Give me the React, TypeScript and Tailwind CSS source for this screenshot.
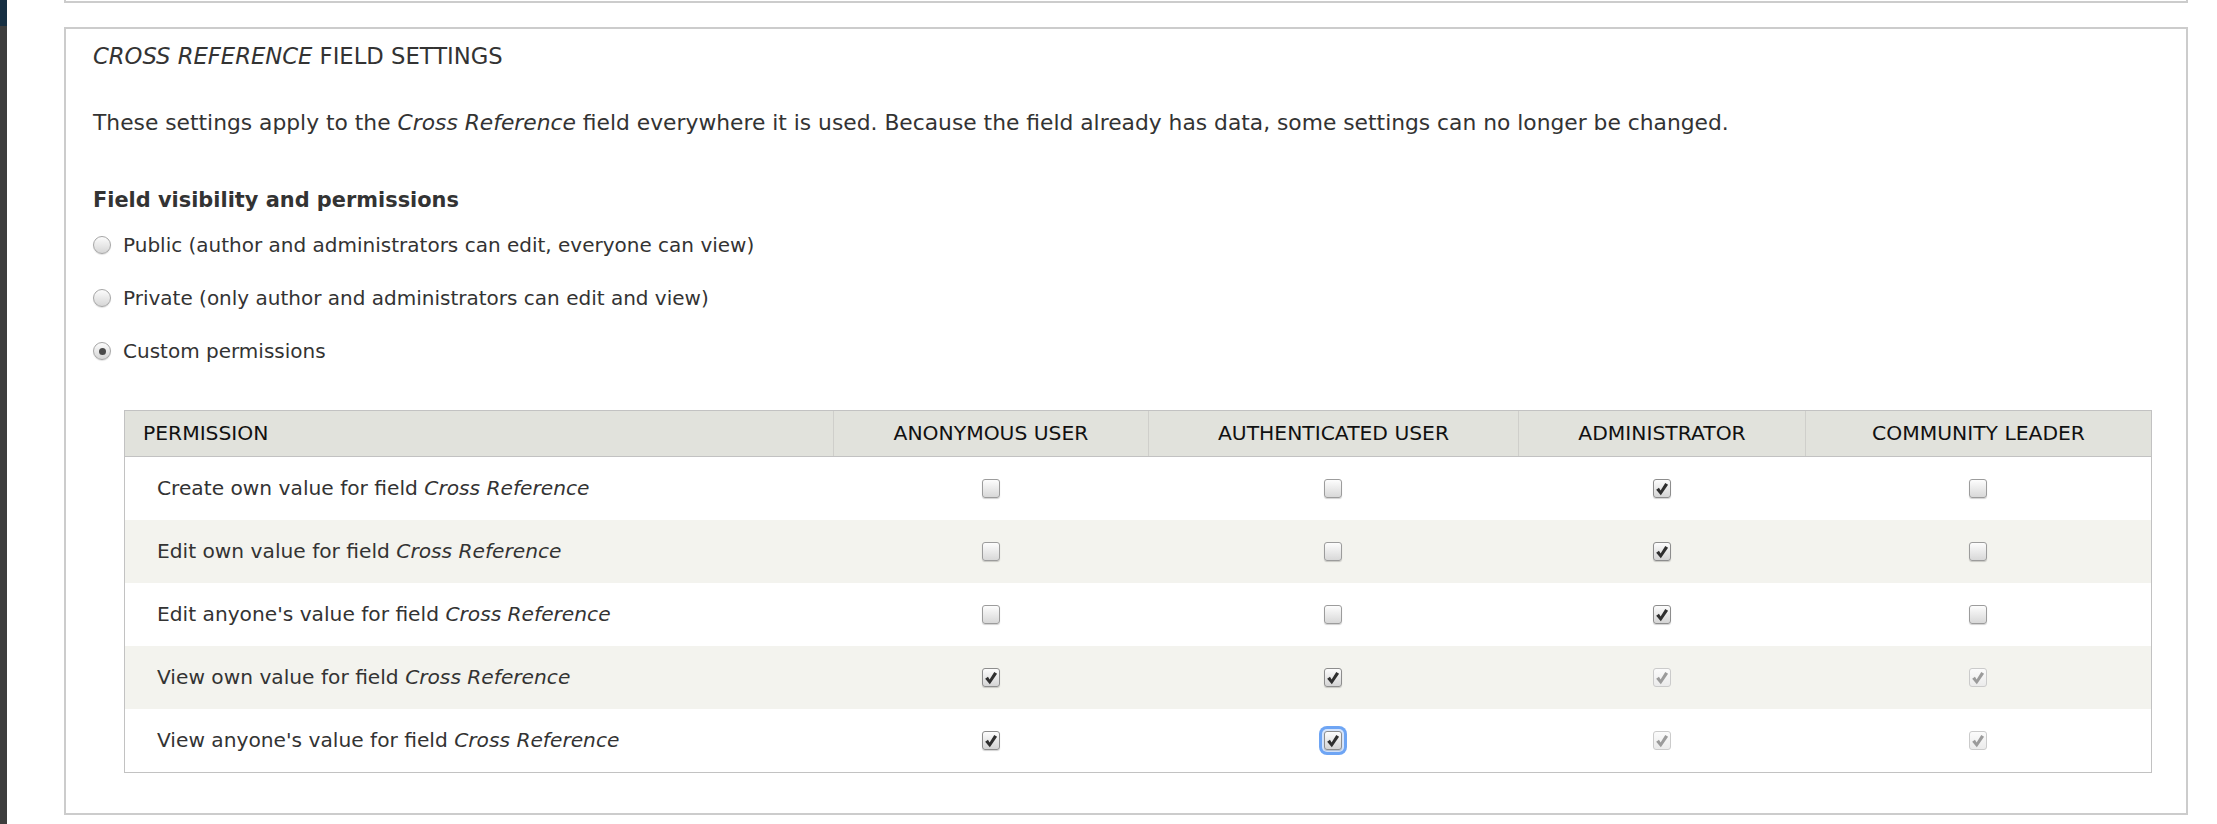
import React from 'react';

type Box = 'off' | 'on' | 'locked' | 'focus';

interface PermRow {
  label: string;
  boxes: Box[];
}

const rows: PermRow[] = [
  { label: 'Create own value for field', boxes: ['off', 'off', 'on', 'off'] },
  { label: 'Edit own value for field', boxes: ['off', 'off', 'on', 'off'] },
  { label: "Edit anyone's value for field", boxes: ['off', 'off', 'on', 'off'] },
  { label: 'View own value for field', boxes: ['on', 'on', 'locked', 'locked'] },
  { label: "View anyone's value for field", boxes: ['on', 'focus', 'locked', 'locked'] },
];

const roles = ['ANONYMOUS USER', 'AUTHENTICATED USER', 'ADMINISTRATOR', 'COMMUNITY LEADER'];

const Check = ({ color }: { color: string }) => (
  <svg viewBox="0 0 12 12" className="w-[14px] h-[14px]">
    <path d="M1.0 6.6 L3.4 4.9 L4.8 7.2 L8.8 0.8 L11.2 2.3 L5.0 11.4 Z" fill={color} />
  </svg>
);

const Checkbox = ({ state }: { state: Box }) => {
  if (state === 'off') {
    return (
      <span className="flex items-center justify-center w-[18px] h-[19px] rounded-[3px] border border-[#9c9c9c] bg-gradient-to-b from-[#fdfdfd] to-[#d8d8d8] shadow-[0_1px_1px_rgba(0,0,0,0.18)]" />
    );
  }
  if (state === 'locked') {
    return (
      <span className="flex items-center justify-center w-[18px] h-[19px] rounded-[3px] border border-[#cbcbcb] bg-gradient-to-b from-[#fbfbfb] to-[#ebebeb]">
        <Check color="#9b9b9b" />
      </span>
    );
  }
  const box = (
    <span className="flex items-center justify-center w-[18px] h-[19px] rounded-[3px] border border-[#8d8d8d] bg-gradient-to-b from-[#fdfdfd] to-[#d4d4d4] shadow-[0_1px_1px_rgba(0,0,0,0.18)]">
      <Check color="#2f2f2f" />
    </span>
  );
  if (state === 'focus') {
    return <span className="flex rounded-[5px] p-[2px] bg-[#d6e5fc] ring-[3px] ring-[#6ea5f4]">{box}</span>;
  }
  return box;
};

const Radio = ({ checked }: { checked?: boolean }) => (
  <span className="flex items-center justify-center w-[18px] h-[18px] rounded-full border border-[#a6a6a6] bg-gradient-to-b from-[#fcfcfc] to-[#d6d6d6] shadow-[0_1px_1px_rgba(0,0,0,0.12)]">
    {checked && <span className="w-[7px] h-[7px] rounded-full bg-[#4a4a4a]" />}
  </span>
);

const App: React.FC = () => {
  return (
    <div className="flex w-[2217px] h-[824px] bg-white text-[#333] overflow-hidden font-['DejaVu_Sans',sans-serif]">
      {/* left admin strip */}
      <div className="w-[7px] flex flex-col">
        <div className="h-[26px] bg-[#172f42]" />
        <div className="flex-1 bg-[#3d3d3d]" />
      </div>

      <div className="flex-1 pl-[57px] pr-[29px]">
        {/* end of the previous fieldset */}
        <div className="h-[3px] border-x-2 border-b-2 border-[#cccccc]" />

        <div className="mt-[24px] border-2 border-[#cccccc] px-[27px] pt-[12px] pb-[40px]">
          <h2 className="text-[22.7px] leading-[30px] uppercase">
            <em>Cross Reference</em> field settings
          </h2>

          <p className="mt-[38px] text-[21.8px] leading-[28px]">
            These settings apply to the <em>Cross Reference</em> field everywhere it is used. Because the field already has data, some settings can no longer be changed.
          </p>

          <div className="mt-[49px] text-[20.9px] leading-[28px] font-bold">Field visibility and permissions</div>

          <div className="mt-[17px] flex flex-col gap-[25px] text-[20px] leading-[28px]">
            <label className="flex items-center gap-[12px]">
              <Radio />
              <span>Public (author and administrators can edit, everyone can view)</span>
            </label>
            <label className="flex items-center gap-[12px]">
              <Radio />
              <span>Private (only author and administrators can edit and view)</span>
            </label>
            <label className="flex items-center gap-[12px]">
              <Radio checked />
              <span>Custom permissions</span>
            </label>
          </div>

          {/* permissions table */}
          <div className="mt-[45px] ml-[31px] mr-[7px] border border-[#c2c2c2]">
            <div className="grid grid-cols-[708px_315px_370px_287px_1fr] h-[46px] bg-[#e1e2dc] border-b border-[#c2c2c2] text-[20.3px] text-[#111]">
              <div className="flex items-center pl-[18px]">PERMISSION</div>
              {roles.map((r) => (
                <div key={r} className="flex items-center justify-center border-l border-[#cfcfcb]">
                  {r}
                </div>
              ))}
            </div>
            {rows.map((row, i) => (
              <div
                key={row.label}
                className={`grid grid-cols-[708px_315px_370px_287px_1fr] h-[63px] text-[20.2px] ${
                  i % 2 === 1 ? 'bg-[#f3f3ee]' : 'bg-white'
                }`}
              >
                <div className="flex items-center pl-[32px]">
                  <span>
                    {row.label} <em>Cross Reference</em>
                  </span>
                </div>
                {row.boxes.map((b, j) => (
                  <div key={j} className="flex items-center justify-center">
                    <Checkbox state={b} />
                  </div>
                ))}
              </div>
            ))}
          </div>
        </div>
      </div>
    </div>
  );
};

export default App;
